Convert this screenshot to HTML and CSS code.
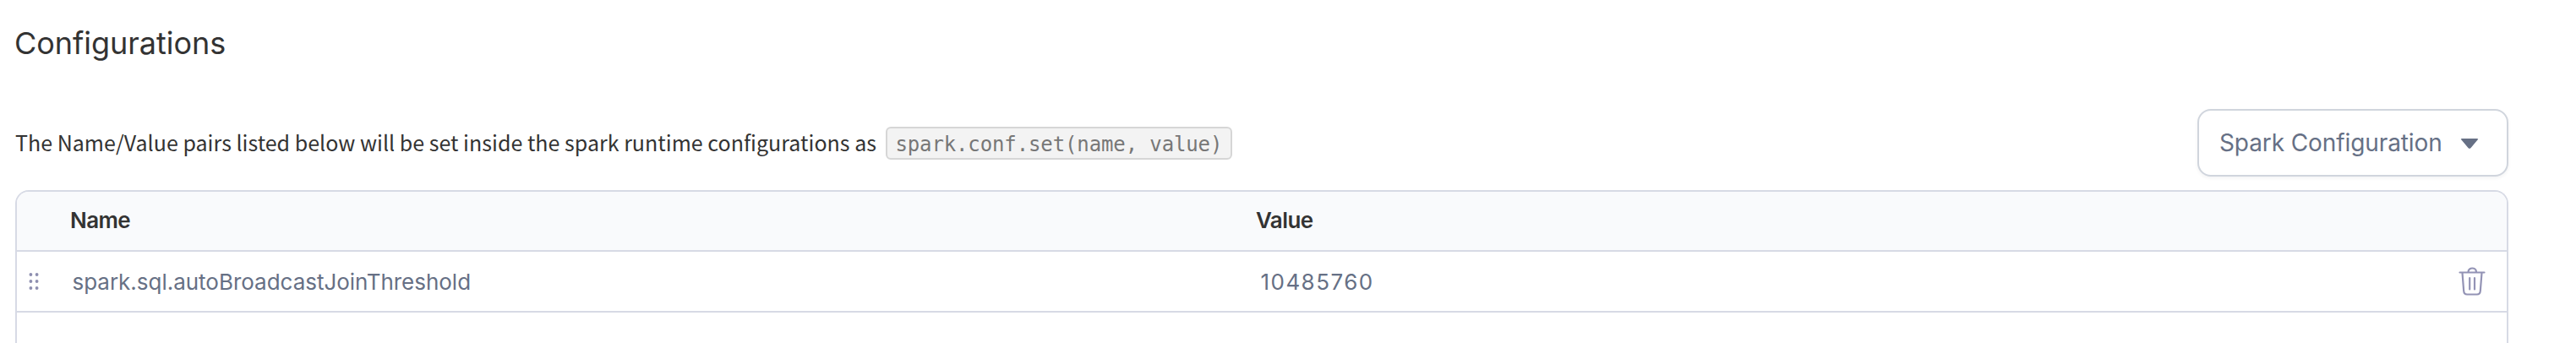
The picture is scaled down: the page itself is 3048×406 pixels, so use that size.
FILE: index.html
```html
<!DOCTYPE html>
<html lang="en">
<head>
<meta charset="utf-8">
<title>Configurations</title>
<link rel="stylesheet" href="styles.css">
</head>
<body>
<main class="page">
  <h1 class="title">Configurations</h1>
  <div class="toolbar">
    <p class="description"><span class="lead">The Name/Value pairs listed below will be set inside the spark runtime configurations as</span><code class="snippet">spark.conf.set(name, value)</code></p>
    <button class="select" type="button">
      <span>Spark Configuration</span>
      <svg class="caret" width="22" height="14" viewBox="0 0 22 14"><path d="M2 1h18q2 0 .6 1.600l-8 9.300q-1.600 1.800-3.200 0l-8-9.300Q0 1 2 1z" fill="#667085"/></svg>
    </button>
  </div>
  <section class="table">
    <div class="row head">
      <span></span><span class="name">Name</span><span class="value">Value</span>
    </div>
    <div class="row item">
      <svg class="grip" width="14" height="22" viewBox="0 0 14 22" fill="#8e8fb0"><circle cx="3.4" cy="3" r="1.900"/><circle cx="10.6" cy="3" r="1.900"/><circle cx="3.4" cy="11" r="1.900"/><circle cx="10.6" cy="11" r="1.900"/><circle cx="3.4" cy="19" r="1.900"/><circle cx="10.6" cy="19" r="1.900"/></svg>
      <span class="name">spark.sql.autoBroadcastJoinThreshold</span>
      <span class="value">10485760</span>
      <svg class="trash" width="32" height="34" viewBox="0 0 32 34" fill="none" stroke="#9393b5" stroke-width="2.200" stroke-linecap="round" stroke-linejoin="round"><path d="M1.500 6.500h29M11.500 6c0-6 9.500-6 9.500 0M4.500 7l1.700 21.500q.3 4 4 4h11.600q3.700 0 4-4L27.500 7M13.200 13v13.500M19 13v13.500"/></svg>
    </div>
  </section>
</main>
</body>
</html>
```
FILE: styles.css
```css
* { box-sizing: border-box; }
body { margin: 0; height: 406px; overflow: hidden; background: #fff; font-family: Inter, sans-serif; color: #333; }
.page { padding: 0 80px 0 18px; }
.title { margin: 0 0 0 -1px; padding-top: 29px; height: 129px; font-size: 36px; line-height: 44px; font-weight: 400; letter-spacing: -.04px; }
.toolbar { display: flex; justify-content: space-between; align-items: center; height: 80px; }
.description { display: flex; align-items: center; gap: 10px; margin: 0; font: 400 25px/40px "Noto Sans CJK SC", sans-serif; letter-spacing: .02px; }
.lead { width: 1020px; padding-bottom: 2px; white-space: nowrap; }
.snippet { width: 410px; height: 39px; padding: 2px 0 0 9.400px; border: 2px solid #d6d6d6; border-radius: 6px; background: #f3f3f3; color: #777; font: 24px/35px "DejaVu Sans Mono", monospace; letter-spacing: -.12px; white-space: nowrap; }
.select { display: flex; align-items: center; justify-content: space-between; width: 368px; height: 80px; padding: 0 33px 0 24px; border: 2px solid #d0d5dd; border-radius: 16px; background: #fff; box-shadow: 0 2px 4px rgba(16,24,40,.05); color: #667085; font: 400 28px/40px Inter, sans-serif; letter-spacing: -.1px; }
.caret { margin-top: 2px; }
.table { margin-top: 16px; height: 181px; border: 2px solid #d7dae5; border-bottom: 0; border-radius: 16px 16px 0 0; overflow: hidden; }
.row { display: grid; grid-template-columns: 63px 1403px 1fr 58px; align-items: center; border-bottom: 2px solid #d7dae5; }
.head { height: 71px; padding-bottom: 2px; background: #f9fafc; font-size: 26px; font-weight: 600; letter-spacing: -.6px; }
.item { height: 72px; font-size: 26px; color: #667085; }
.item .name { padding-left: 2.500px; letter-spacing: -.02px; }
.item .value { padding-left: 5.500px; letter-spacing: 1.450px; }
.grip { margin-left: 13px; }
.trash { margin-left: 1px; }
```
